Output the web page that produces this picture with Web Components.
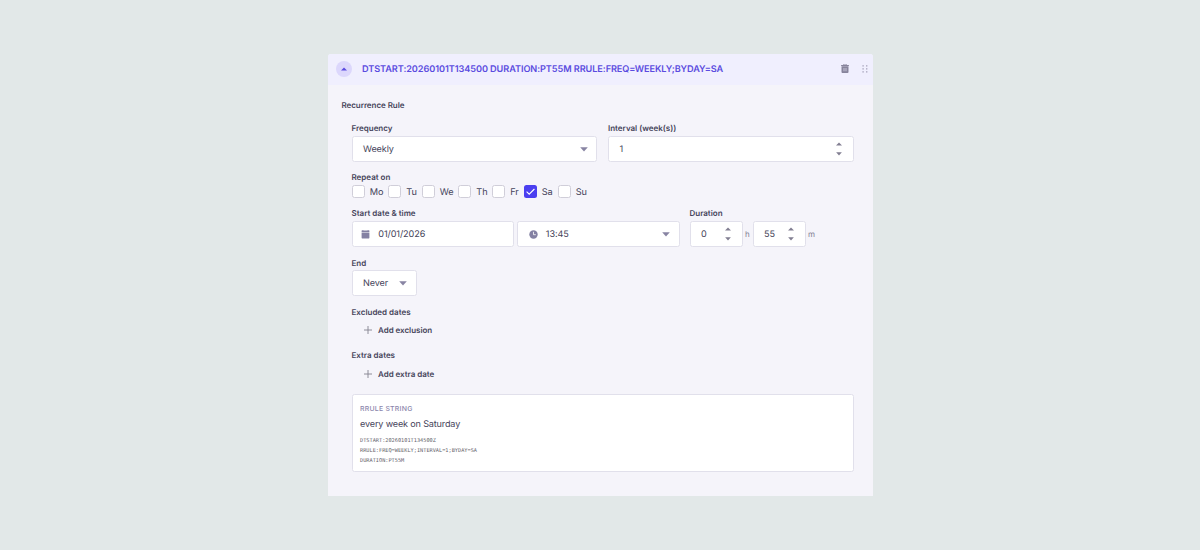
<!DOCTYPE html>
<html lang="en">
<head>
<meta charset="utf-8">
<title>Recurrence rule</title>
<style>
body {
    margin: 0;
    height: 550px;
    overflow: hidden;
    background: #e2e8e8;
    font-family: Inter, "Liberation Sans", sans-serif;
    text-rendering: geometricPrecision;
    color: #46445a;
}
rule-panel {
    margin: 54px 0 0 327.5px;
}
.row {
    display: flex;
}
.low {
    --label-line: 16px;
}
</style>
</head>
<body>
<rule-panel heading="DTSTART:20260101T134500 DURATION:PT55M RRULE:FREQ=WEEKLY;BYDAY=SA">
    <div class="row" style="gap: 11px">
        <form-field label="Frequency" style="flex: 1"><select-box value="Weekly"></select-box></form-field>
        <form-field label="Interval (week(s))" style="flex: 1"><number-box value="1"></number-box></form-field>
    </div>
    <form-field label="Repeat on"><day-picker value="Sa"></day-picker></form-field>
    <div class="row" style="gap: 10px">
        <form-field label="Start date &amp; time">
            <select-box icon="calendar" value="01/01/2026" plain style="width: 162.5px"></select-box>
            <select-box icon="clock" value="13:45" style="width: 162.5px; margin-left: 3px"></select-box>
        </form-field>
        <form-field label="Duration">
            <number-box value="0" unit="h" small></number-box>
            <number-box value="55" unit="m" small></number-box>
        </form-field>
    </div>
    <form-field class="low" label="End"><select-box value="Never" style="width: 65px"></select-box></form-field>
    <form-field class="low" label="Excluded dates"><add-button>Add exclusion</add-button></form-field>
    <form-field label="Extra dates"><add-button>Add extra date</add-button></form-field>
    <rule-summary text="every week on Saturday">DTSTART:20260101T134500Z
RRULE:FREQ=WEEKLY;INTERVAL=1;BYDAY=SA
DURATION:PT55M</rule-summary>
</rule-panel>

<script>
const icons = {
    up: '<svg width="6" height="4" viewBox="0 0 6 4"><path d="M0 3.4 L3 .5 L6 3.4Z"/></svg>',
    down: '<svg width="8" height="5" viewBox="0 0 8 5"><path d="M.2 .3H7.8L4 4.6Z"/></svg>',
    trash: '<svg width="8" height="9" viewBox="0 0 8 9"><path fill-rule="evenodd" d="M2.3 1V.6Q2.3 0 2.9 0H5.1Q5.7 0 5.7 .6V1H7.6Q8 1 8 1.4V2.1H0V1.4Q0 1 .4 1ZM3 1H5V.6H3ZM.5 2.3H7.5V8Q7.5 9 6.5 9H1.5Q.5 9 .5 8ZM2.7 4V7.2H3.3V4ZM4.7 4V7.2H5.3V4Z"/></svg>',
    grip: '<svg width="6" height="8" viewBox="0 0 6 8"><path d="M.4 .2h1.4v1.4h-1.4zM4 .2h1.4v1.4h-1.4zM.4 3.2h1.4v1.4h-1.4zM4 3.2h1.4v1.4h-1.4zM.4 6.2h1.4v1.4h-1.4zM4 6.2h1.4v1.4h-1.4z"/></svg>',
    calendar: '<svg width="9" height="9" viewBox="0 0 9 9"><path d="M.6 .6H1.5V0H2.3V.6H6.7V0H7.5V.6H8.4V2H.6ZM.6 2.6H8.4V7.8Q8.4 8.4 7.8 8.4H1.2Q.6 8.4 .6 7.8Z"/></svg>',
    clock: '<svg width="9" height="9" viewBox="0 0 9 9"><circle cx="4.5" cy="4.5" r="4.2"/><path d="M4.5 1.8V4.7H6.8" fill="none" stroke="#fff" stroke-width=".8"/></svg>',
    plus: '<svg width="8" height="8" viewBox="0 0 8 8"><path d="M4 0V8M0 4H8" stroke="currentColor" stroke-width=".9"/></svg>',
    check: '<svg width="13" height="13" viewBox="0 0 13 13"><path d="M2.6 6.7L5.2 9.2L10.4 4" fill="none" stroke="#fff" stroke-width="1.1"/></svg>'
};

// shared by every element of the form
const base = `
* { box-sizing: border-box; }
svg { display: block; fill: currentColor; flex: none; }
`;

class BaseElement extends HTMLElement {
    connectedCallback() {
        if (this.shadowRoot) return;
        this.attachShadow({ mode: 'open' });
        this.shadowRoot.innerHTML = `<style>${base}</style>` + this.render();
    }
    attr(name) {
        return this.getAttribute(name) || '';
    }
}

class RulePanel extends BaseElement {
    render() {
        return `
<style>
:host { display: block; box-sizing: border-box; width: 545.5px; height: 442px; background: #f5f4fa; border-radius: 3px 3px 0 0; overflow: hidden; }
header { display: flex; align-items: center; height: 31px; padding: 0 5.5px 1px 8.5px; background: #f0effe; color: #5a4be0; }
.toggle { display: flex; align-items: center; justify-content: center; width: 16px; height: 16px; border-radius: 50%; background: #dcd7fc; }
h1 { flex: 1; margin: 0 0 0 10px; padding-top: 1px; font-size: 9.15px; font-weight: 600; line-height: 14px; letter-spacing: -.06px; white-space: nowrap; }
.trash { margin: 0 12.5px 1px 0; color: #87849c; }
.grip { color: #a5a2ba; }
h2 { margin: 0; padding: 12px 0 0 14px; height: 36px; font-size: 8px; font-weight: 600; line-height: 16px; letter-spacing: -.05px; }
main { display: flex; flex-direction: column; gap: 8px; padding: 0 19.5px 0 24px; }
</style>
<header><span class="toggle">${icons.up}</span><h1>${this.attr('heading')}</h1><span class="trash">${icons.trash}</span><span class="grip">${icons.grip}</span></header>
<h2>Recurrence Rule</h2>
<main><slot></slot></main>`;
    }
}

class FormField extends BaseElement {
    render() {
        return `
<style>
:host { display: block; }
label { display: block; height: 15px; font-size: 8px; font-weight: 600; line-height: var(--label-line, 15px); white-space: nowrap; }
.control { display: flex; }
::slotted(*) { flex: none; }
</style>
<label>${this.attr('label').replace('&', '&amp;')}</label>
<div class="control"><slot></slot></div>`;
    }
}

const boxStyle = `
.box { display: flex; align-items: center; height: 26px; border: 1px solid #e1e0eb; border-radius: 2.5px; background: #fff; font-size: 9.1px; line-height: 14px; letter-spacing: -.1px; }
.value { padding-top: 1px; }
`;

class SelectBox extends BaseElement {
    render() {
        const icon = this.attr('icon');
        const left = { calendar: 8.5, clock: 10.5 }[icon] || 10.5;
        return `
<style>
:host { display: block; width: 245.5px; }
${boxStyle}
.box { padding: 0 8.5px 0 ${left}px; color: #46445a; }
.value { flex: 1; }
.icon { margin-right: 8.3px; color: #8481a3; }
.arrow { color: #8884a3; }
</style>
<div class="box">
${icon ? `<span class="icon">${icons[icon]}</span>` : ''}
<span class="value">${this.attr('value')}</span>
${this.hasAttribute('plain') ? '' : `<span class="arrow">${icons.down}</span>`}
</div>`;
    }
}

class NumberBox extends BaseElement {
    render() {
        const small = this.hasAttribute('small');
        return `
<style>
:host { display: flex; align-items: center; }
${boxStyle}
.box { justify-content: space-between; width: ${small ? 53.5 : 245.5}px; padding: 0 11px 0 10.5px; }
.steps { display: flex; flex-direction: column; gap: 6px; color: #817e91; }
.steps svg { width: 6px; height: 4px; }
.unit { width: 9.5px; padding-left: 2px; font-size: 8px; color: #7f7c92; }
</style>
<div class="box"><span class="value">${this.attr('value')}</span><span class="steps">${icons.up}${icons.down}</span></div>
${small ? `<span class="unit">${this.attr('unit')}</span>` : ''}`;
    }
}

class DayPicker extends BaseElement {
    render() {
        // each day is as wide as its name plus its own gap
        const days = { Mo: 36.5, Tu: 33.5, We: 36.5, Th: 34, Fr: 31.5, Sa: 34, Su: 34 };
        return `
<style>
:host { display: flex; height: 13px; }
.day { display: flex; align-items: center; gap: 5.3px; font-size: 9.2px; line-height: 13px; letter-spacing: -.1px; }
.day span { padding-top: 1px; }
i { width: 13px; height: 13px; border: 1px solid #d0ced9; border-radius: 2.5px; background: #fff; }
i.on { border: 0; background: #4b3ff0; }
</style>
${Object.keys(days).map(day => {
    const on = day === this.attr('value');
    return `<span class="day" style="width: ${days[day]}px"><i class="${on ? 'on' : ''}">${on ? icons.check : ''}</i><span>${day}</span></span>`;
}).join('')}`;
    }
}

class AddButton extends BaseElement {
    render() {
        return `
<style>
:host { display: flex; align-items: center; height: 21px; padding-left: 12px; gap: 6.5px; font-size: 8px; font-weight: 600; letter-spacing: -.03px; }
svg { color: #85828f; }
</style>
${icons.plus}<span><slot></slot></span>`;
    }
}

class RuleSummary extends BaseElement {
    render() {
        return `
<style>
:host { display: block; box-sizing: border-box; height: 78px; margin-top: 2px; padding: 7px 7.5px; border: 1px solid #e1e0eb; border-radius: 2.5px; background: #fff; }
h3 { margin: 0; font-size: 6.9px; font-weight: 500; line-height: 13px; letter-spacing: .25px; color: #8a85ab; }
p { margin: 2px 0 5px; font-size: 9.1px; line-height: 15px; letter-spacing: -.16px; }
pre { margin: 0; font: 5.25px/9.8px "DejaVu Sans Mono", monospace; color: #66646c; }
</style>
<h3>RRULE STRING</h3>
<p>${this.attr('text')}</p>
<pre><slot></slot></pre>`;
    }
}

customElements.define('rule-panel', RulePanel);
customElements.define('form-field', FormField);
customElements.define('select-box', SelectBox);
customElements.define('number-box', NumberBox);
customElements.define('day-picker', DayPicker);
customElements.define('add-button', AddButton);
customElements.define('rule-summary', RuleSummary);
</script>
</body>
</html>
